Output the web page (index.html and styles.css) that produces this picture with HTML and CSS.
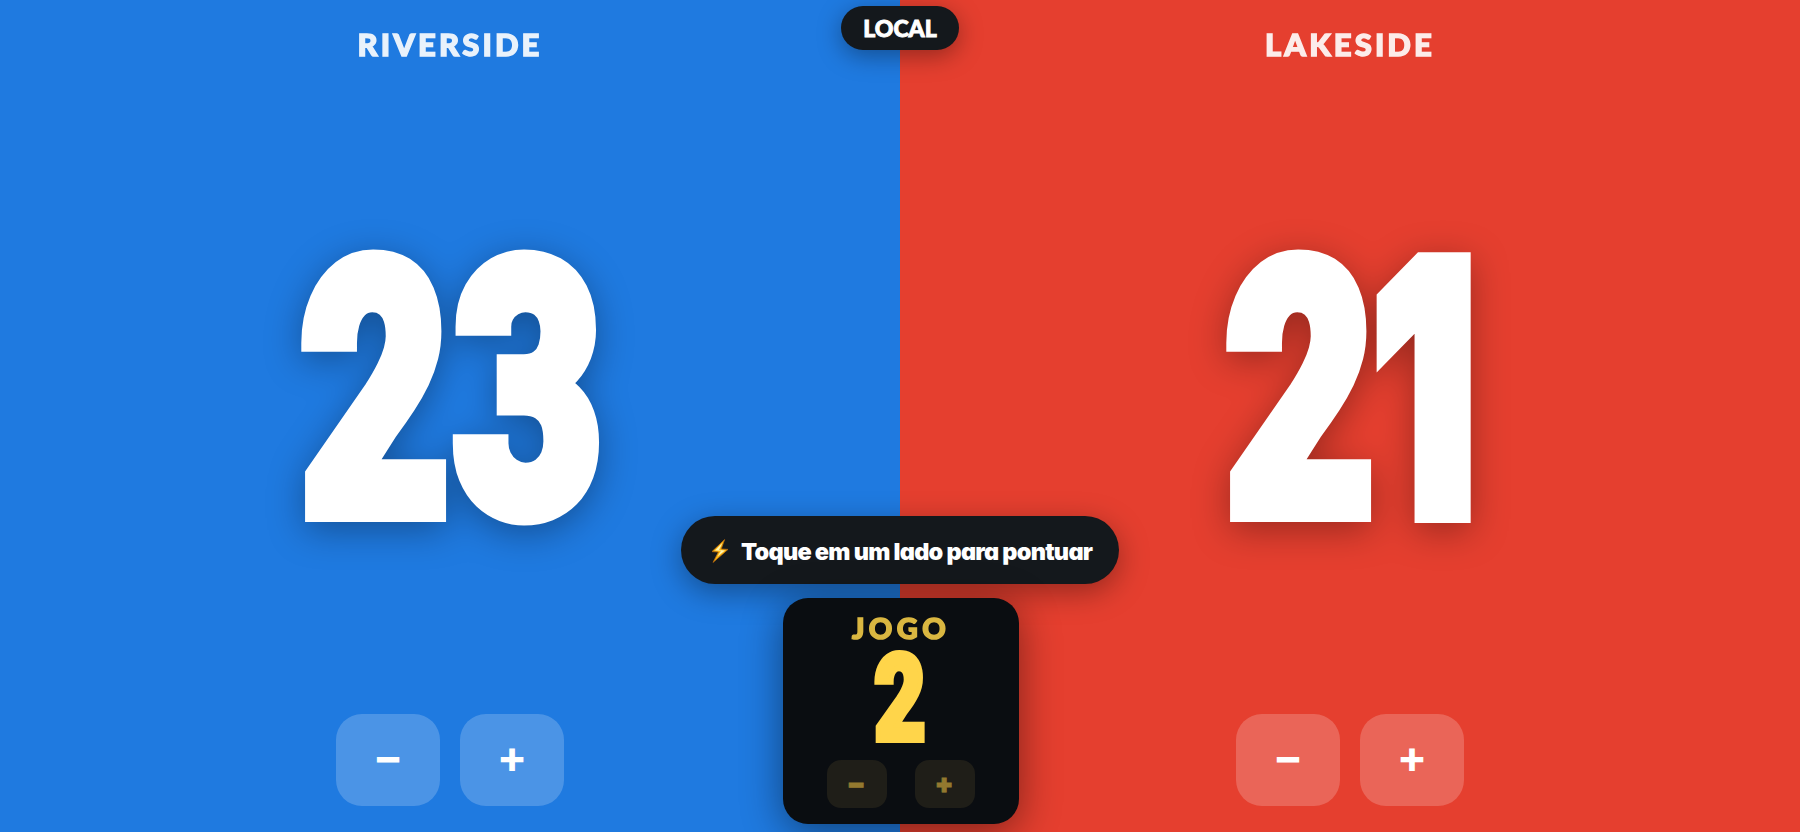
FILE: index.html
```
<!DOCTYPE html>
<html lang="pt-BR">
<head>
    <meta charset="UTF-8">
    <meta name="viewport" content="width=device-width, initial-scale=1.0">
    <title>Placar</title>
    <link rel="stylesheet" href="styles.css">
</head>
<body>
    <main class="scoreboard">
        <section class="team team-home">
            <h2 class="team-name">RIVERSIDE</h2>
            <div class="score">
                <span class="digit">2</span>
                <span class="digit">3</span>
            </div>
            <div class="controls">
                <button class="btn">−</button>
                <button class="btn">+</button>
            </div>
        </section>

        <section class="team team-away">
            <h2 class="team-name">LAKESIDE</h2>
            <div class="score">
                <span class="digit">2</span>
                <span class="digit one">1</span>
            </div>
            <div class="controls">
                <button class="btn">−</button>
                <button class="btn">+</button>
            </div>
        </section>
    </main>

    <div class="mode-badge">LOCAL</div>

    <div class="toast">
        <svg class="bolt" viewBox="0 0 18 24">
            <path d="M13.6 0.6 L1 12.6 L7.4 13 L2 23.4 L17 10.4 L10.2 10 Z" fill="#fdb813" stroke="#b8690c" stroke-width="0.8"/>
            <path d="M11.4 4 L4 11.6 L10 11.8 L6.4 17.6 L14 11.4 L8 11 Z" fill="#fff3b0"/>
        </svg>
        <span>Toque em um lado para pontuar</span>
    </div>

    <div class="game">
        <div class="game-label">JOGO</div>
        <div class="game-value">2</div>
        <div class="game-controls">
            <button class="game-btn">−</button>
            <button class="game-btn">+</button>
        </div>
    </div>
</body>
</html>
```

FILE: styles.css
```
* {
    box-sizing: border-box;
}
body {
    margin: 0;
    height: 100vh;
    overflow: hidden;
    position: relative;
    font-family: Lato, "Open Sans", sans-serif;
    font-weight: 900;
    color: #fff;
}
.scoreboard {
    display: grid;
    grid-template-columns: 1fr 1fr;
    height: 100vh;
}
.team {
    display: flex;
    flex-direction: column;
    align-items: center;
    justify-content: space-between;
    padding: 26px 0;
}
.team-home {
    background: #1f7ae0;
}
.team-away {
    background: #e53f2f;
}
.team-name {
    margin: 0;
    font-size: 31px;
    line-height: 37px;
    font-weight: 900;
    letter-spacing: 3.1px;
    white-space: nowrap;
    opacity: 0.9;
    -webkit-text-stroke: 1.4px #fff;
}
.score {
    display: flex;
    gap: 11px;
    height: 273px;
    font-family: Roboto, sans-serif;
    font-size: 353px;
    line-height: 281px;
    filter: drop-shadow(0 8px 18px rgba(0, 0, 0, 0.33));
}
.digit {
    display: flex;
    justify-content: center;
    width: 142px;
    transform: translateX(1px) scaleX(0.73);
    -webkit-text-stroke: 18px #fff;
}
.one {
    width: 92px;
    font-family: Inter, sans-serif;
    font-size: 350px;
    line-height: 271px;
    transform: translateX(-3px) scaleX(0.66);
    -webkit-text-stroke: 16px #fff;
}
.controls {
    display: flex;
    gap: 20px;
}
.btn {
    width: 104px;
    height: 92px;
    padding: 0 0 6px;
    border: none;
    border-radius: 26px;
    background: rgba(255, 255, 255, 0.2);
    color: #fff;
    font-family: Inter, sans-serif;
    font-size: 45px;
    font-weight: 700;
    line-height: 86px;
    cursor: pointer;
}
.mode-badge {
    position: absolute;
    top: 6px;
    left: 50%;
    transform: translateX(-50%);
    width: 118px;
    height: 44px;
    border-radius: 22px;
    background: #14181c;
    font-size: 23px;
    line-height: 44px;
    text-align: center;
    -webkit-text-stroke: 0.9px #fff;
    box-shadow: 0 6px 24px rgba(0, 0, 0, 0.35);
}
.toast {
    position: absolute;
    top: 516px;
    left: 50%;
    transform: translateX(-50%);
    display: flex;
    align-items: center;
    gap: 12px;
    width: 438px;
    height: 68px;
    padding: 2px 0 0 30px;
    border-radius: 34px;
    background: #14181c;
    font-family: Inter, sans-serif;
    font-size: 23.5px;
    font-feature-settings: "cv11";
    letter-spacing: -0.75px;
    white-space: nowrap;
    box-shadow: 0 8px 30px rgba(0, 0, 0, 0.35);
}
.bolt {
    width: 18px;
    height: 24px;
}
.game {
    position: absolute;
    top: 598px;
    left: 783px;
    display: flex;
    flex-direction: column;
    align-items: center;
    width: 236px;
    height: 226px;
    padding-top: 12px;
    border-radius: 25px;
    background: #0a0d11;
    color: #ffd54a;
    box-shadow: 0 8px 40px rgba(0, 0, 0, 0.45);
}
.game-label {
    font-size: 29px;
    line-height: 35px;
    letter-spacing: 4.4px;
    opacity: 0.85;
    -webkit-text-stroke: 1.5px #ffd54a;
}
.game-value {
    margin-top: 5px;
    height: 94px;
    font-family: Roboto, sans-serif;
    font-size: 121px;
    line-height: 99px;
    transform: translateX(-1px) scaleX(0.74);
    -webkit-text-stroke: 6px #ffd54a;
}
.game-controls {
    display: flex;
    gap: 28px;
    margin-top: 16px;
}
.game-btn {
    width: 60px;
    height: 48px;
    padding: 0 2px 0 0;
    border: none;
    border-radius: 14px;
    background: #1f1e18;
    color: #93792f;
    font-family: Inter, sans-serif;
    font-size: 27px;
    font-weight: 900;
    line-height: 48px;
    -webkit-text-stroke: 0.8px #93792f;
    cursor: pointer;
}
```
